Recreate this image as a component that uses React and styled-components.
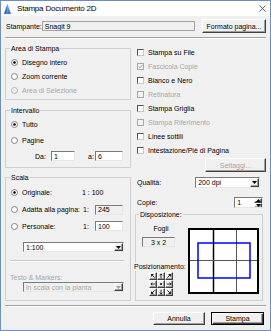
import styled, { createGlobalStyle, css } from 'styled-components'

const GlobalStyle = createGlobalStyle`
  html, body {
    margin: 0;
    padding: 0;
    background: #f0f0f0;
  }
  body {
    font-family: "Liberation Sans", Arial, sans-serif;
  }
`

const sunken = css`
  border: 1px solid;
  border-color: #7a7a7a #e6e6e6 #e6e6e6 #7a7a7a;
`

const raised = css`
  border: 1px solid;
  border-color: #fff #404040 #404040 #fff;
  box-shadow: inset -1px -1px #a0a0a0;
`

const s = {
  Window: styled.div`
    width: 271px;
    height: 331px;
    box-sizing: border-box;
    border: 1px solid #6f8fbb;
    background: #f0f0f0;
    display: flex;
    flex-direction: column;
    font-family: "Liberation Sans", Arial, sans-serif;
    font-size: 7px;
    color: #000;
    overflow: hidden;
  `,
  TitleBar: styled.div`
    height: 15px;
    flex-shrink: 0;
    background: #fff;
    display: flex;
    align-items: center;
    padding: 0 4px 0 3px;
  `,
  TitleText: styled.div`
    margin-left: 6px;
    font-size: 8px;
    letter-spacing: -0.2px;
  `,
  Close: styled.svg`
    margin-left: auto;
  `,
  Body: styled.div`
    flex: 1;
    display: flex;
    flex-direction: column;
    padding: 0 4px;
  `,
  PrinterRow: styled.div`
    margin-top: 3px;
    height: 14px;
    display: flex;
    align-items: center;
    padding-left: 1px;
  `,
  Etched: styled.div`
    margin-top: ${(p) => p.$mt || 0}px;
    height: 0;
    border-top: 1px solid #a0a0a0;
    border-bottom: 1px solid #fff;
  `,
  Main: styled.div`
    display: grid;
    grid-template-columns: 126px 1fr;
    column-gap: 4px;
    align-items: start;
  `,
  Column: styled.div`
    display: flex;
    flex-direction: column;
    padding-left: ${(p) => p.$pl || 0}px;
  `,
  Group: styled.fieldset`
    margin: ${(p) => p.$mt || 0}px ${(p) => p.$mr || 0}px 0 ${(p) => p.$ml || 0}px;
    padding: 0 ${(p) => p.$pr || 0}px ${(p) => p.$pb || 0}px ${(p) => (p.$pl ?? 4)}px;
    border: 1px solid #cfcfcf;
    min-width: 0;
    display: flex;
    flex-direction: column;
  `,
  Legend: styled.legend`
    padding: 0 1px;
    margin-left: ${(p) => p.$ml || 0}px;
    line-height: 9px;
    font-size: 7px;
  `,
  Rows: styled.div`
    display: flex;
    flex-direction: column;
    padding-top: ${(p) => p.$pt || 0}px;
  `,
  Row: styled.div`
    height: ${(p) => p.$h}px;
    display: flex;
    align-items: center;
    padding-left: ${(p) => p.$pl ?? 1}px;
    margin-top: ${(p) => p.$mt || 0}px;
  `,
  OptionPart: styled.div`
    display: flex;
    align-items: center;
    gap: 4px;
    width: ${(p) => (p.$w ? `${p.$w}px` : 'auto')};
    flex-shrink: 0;
  `,
  Label: styled.span`
    white-space: nowrap;
    width: ${(p) => (p.$w ? `${p.$w}px` : 'auto')};
    margin-left: ${(p) => p.$ml || 0}px;
    flex-shrink: 0;
    color: ${(p) => (p.$disabled ? '#a6a6a6' : '#000')};
  `,
  TextLine: styled.div`
    line-height: 9px;
    white-space: nowrap;
    margin-top: ${(p) => p.$mt || 0}px;
    margin-left: ${(p) => p.$ml || 0}px;
    color: ${(p) => (p.$disabled ? '#a6a6a6' : '#000')};
    background: #f0f0f0;
    position: relative;
    ${(p) => p.$center && 'text-align: center;'}
    ${(p) => p.$w && `width: ${p.$w}px;`}
  `,
  Field: styled.div`
    box-sizing: border-box;
    height: ${(p) => p.$h || 10}px;
    width: ${(p) => (p.$w ? `${p.$w}px` : 'auto')};
    ${(p) => p.$grow && 'flex: 1;'}
    margin-left: ${(p) => p.$ml || 0}px;
    margin-right: ${(p) => p.$mr || 0}px;
    margin-top: ${(p) => p.$mt || 0}px;
    ${(p) =>
      p.$flat
        ? 'border: 1px solid #a5a5a5;'
        : sunken}
    background: ${(p) => (p.$gray ? '#f0f0f0' : '#fff')};
    display: flex;
    align-items: center;
    justify-content: ${(p) => (p.$center ? 'center' : 'flex-start')};
    padding-left: ${(p) => (p.$center ? 0 : 2)}px;
    color: ${(p) => (p.$disabled ? '#a6a6a6' : '#000')};
    white-space: nowrap;
    overflow: hidden;
  `,
  SelectBox: styled.div`
    box-sizing: border-box;
    height: ${(p) => p.$h || 10}px;
    width: ${(p) => p.$w}px;
    margin-left: ${(p) => p.$ml || 0}px;
    margin-right: ${(p) => p.$mr || 0}px;
    margin-top: ${(p) => p.$mt || 0}px;
    ${sunken}
    background: ${(p) => (p.$disabled ? '#f0f0f0' : '#fff')};
    display: flex;
    align-items: stretch;
  `,
  SelectText: styled.div`
    flex: 1;
    display: flex;
    align-items: center;
    padding-left: 2px;
    white-space: nowrap;
    overflow: hidden;
    color: ${(p) => (p.$disabled ? '#a6a6a6' : '#000')};
  `,
  DropButton: styled.div`
    box-sizing: border-box;
    width: 9px;
    background: #f0f0f0;
    ${raised}
    display: flex;
    align-items: center;
    justify-content: center;
  `,
  SpinButtons: styled.div`
    width: 8px;
    display: flex;
    flex-direction: column;
    margin-left: auto;
  `,
  SpinButton: styled.div`
    box-sizing: border-box;
    flex: 1;
    background: #f0f0f0;
    ${raised}
    display: flex;
    align-items: center;
    justify-content: center;
  `,
  Button: styled.button`
    box-sizing: border-box;
    width: ${(p) => p.$w}px;
    height: ${(p) => p.$h || 14}px;
    margin: ${(p) => p.$mt || 0}px 0 0 ${(p) => p.$ml || 0}px;
    padding: 0;
    font: inherit;
    font-size: 7px;
    color: #000;
    background: #f0f0f0;
    ${raised}
    ${(p) => p.$self && `align-self: ${p.$self};`}
    ${(p) =>
      p.$primary &&
      css`
        border-color: #000;
        box-shadow: inset 1px 1px #fff, inset -1px -1px #404040, inset -2px -2px #a0a0a0;
      `}
    &:disabled {
      color: #a6a6a6;
    }
  `,
  CheckBox: styled.div`
    box-sizing: border-box;
    width: 7px;
    height: 7px;
    flex-shrink: 0;
    border: 1px solid;
    border-color: ${(p) => (p.$disabled ? '#a8a8a8' : '#555 #c8c8c8 #c8c8c8 #555')};
    background: ${(p) => (p.$disabled ? '#f4f4f4' : '#fff')};
    display: flex;
    align-items: center;
    justify-content: center;
  `,
  Separator: styled.div`
    width: 114px;
    margin-top: 8px;
    border-top: 1px solid #c8c8c8;
    border-bottom: 1px solid #fff;
  `,
  Layout: styled.div`
    display: flex;
    align-items: flex-start;
  `,
  SubColumn: styled.div`
    width: 48px;
    display: flex;
    flex-direction: column;
    flex-shrink: 0;
  `,
  PosGrid: styled.div`
    margin: 1px 0 0 12px;
    display: grid;
    grid-template-columns: repeat(3, 8px);
    grid-template-rows: repeat(3, 8px);
  `,
  PosButton: styled.div`
    box-sizing: border-box;
    background: #f0f0f0;
    ${raised}
    display: flex;
    align-items: center;
    justify-content: center;
  `,
  Preview: styled.svg`
    margin: 9px 0 0 3px;
    flex-shrink: 0;
    background: #fff;
  `,
  Footer: styled.div`
    margin-top: 5px;
    display: flex;
    justify-content: flex-end;
    gap: 6px;
    padding-right: 2px;
  `,
}

const Triangle = ({ up, color = '#000' }) => (
  <svg width="5" height="3" viewBox="0 0 5 3">
    <polygon points={up ? '0,3 5,3 2.5,0' : '0,0 5,0 2.5,3'} fill={color} />
  </svg>
)

const RadioMark = ({ checked, disabled }) => (
  <svg width="7" height="7" viewBox="0 0 7 7" style={{ flexShrink: 0 }}>
    <circle cx="3.5" cy="3.5" r="3" fill={disabled ? '#f0f0f0' : '#fff'} stroke={disabled ? '#b4b4b4' : '#858585'} strokeWidth="1" />
    {checked && <circle cx="3.5" cy="3.5" r="1.3" fill="#000" />}
  </svg>
)

const Option = ({ label, checked, disabled, w }) => (
  <s.OptionPart $w={w}>
    <RadioMark checked={checked} disabled={disabled} />
    <s.Label $disabled={disabled}>{label}</s.Label>
  </s.OptionPart>
)

const Check = ({ label, checked, disabled }) => (
  <s.Row $h={14} $pl={0}>
    <s.OptionPart>
      <s.CheckBox $disabled={disabled}>
        {checked && (
          <svg width="5" height="5" viewBox="0 0 5 5">
            <path d="M0.6 2.4 L2 3.8 L4.4 1" fill="none" stroke={disabled ? '#a0a0a0' : '#000'} strokeWidth="1" />
          </svg>
        )}
      </s.CheckBox>
      <s.Label $disabled={disabled}>{label}</s.Label>
    </s.OptionPart>
  </s.Row>
)

const Select = ({ value, disabled, w, h, ml, mr, mt }) => (
  <s.SelectBox $w={w} $h={h} $ml={ml} $mr={mr} $mt={mt} $disabled={disabled}>
    <s.SelectText $disabled={disabled}>{value}</s.SelectText>
    <s.DropButton>
      <Triangle color={disabled ? '#a0a0a0' : '#000'} />
    </s.DropButton>
  </s.SelectBox>
)

const Arrow = ({ angle }) => (
  <svg width="6" height="6" viewBox="0 0 6 6">
    {angle === null ? (
      <circle cx="3" cy="3" r="1" fill="#000" />
    ) : (
      <g transform={`rotate(${angle} 3 3)`} fill="none" stroke="#000" strokeWidth="0.8">
        <path d="M3 5.3 V0.9 M1.6 2.3 L3 0.9 L4.4 2.3" />
      </g>
    )}
  </svg>
)

const positions = [-45, 0, 45, -90, null, 90, -135, 180, 135]

const App = () => {
  return (
    <>
      <GlobalStyle />
      <s.Window>
        <s.TitleBar>
          <svg width="7" height="10" viewBox="0 0 7 10">
            <defs>
              <linearGradient id="ic" x1="0" y1="0" x2="1" y2="1">
                <stop offset="0" stopColor="#bcd4f6" />
                <stop offset="1" stopColor="#1f5fc8" />
              </linearGradient>
            </defs>
            <polygon points="3.5,0 7,10 0,10" fill="url(#ic)" />
            <polygon points="3.5,0 2,10 0,10" fill="#2a63c0" />
          </svg>
          <s.TitleText>Stampa Documento 2D</s.TitleText>
          <s.Close width="7" height="7" viewBox="0 0 7 7">
            <path d="M0.5 0.5 L6.5 6.5 M6.5 0.5 L0.5 6.5" stroke="#333" strokeWidth="0.8" />
          </s.Close>
        </s.TitleBar>

        <s.Body>
          <s.PrinterRow>
            <s.Label>Stampante:</s.Label>
            <s.Field $grow $flat $gray>Snagit 9</s.Field>
            <s.Button $w={64} $ml={7}>Formato pagina...</s.Button>
          </s.PrinterRow>
          <s.Etched $mt={4} />

          <s.Main>
            <s.Column>
              <s.Group $mt={5} $pb={2}>
                <s.Legend>Area di Stampa</s.Legend>
                <s.Rows $pt={2}>
                  <s.Row $h={14}><Option label="Disegno intero" checked /></s.Row>
                  <s.Row $h={14}><Option label="Zoom corrente" /></s.Row>
                  <s.Row $h={14}><Option label="Area di Selezione" disabled /></s.Row>
                </s.Rows>
              </s.Group>

              <s.Group $mt={6} $pb={3}>
                <s.Legend>Intervallo</s.Legend>
                <s.Rows $pt={1}>
                  <s.Row $h={16}><Option label="Tutto" checked /></s.Row>
                  <s.Row $h={16}><Option label="Pagine" /></s.Row>
                  <s.Row $h={16} $pl={25}>
                    <s.Label $w={16}>Da:</s.Label>
                    <s.Field $w={24}>1</s.Field>
                    <s.Label $w={7} $ml={13}>a:</s.Label>
                    <s.Field $w={28}>6</s.Field>
                  </s.Row>
                </s.Rows>
              </s.Group>

              <s.Group $mt={5} $pb={8}>
                <s.Legend>Scala</s.Legend>
                <s.Rows $pt={2}>
                  <s.Row $h={17}>
                    <Option label="Originale:" checked w={71} />
                    <s.Label>1 : 100</s.Label>
                  </s.Row>
                  <s.Row $h={17}>
                    <Option label="Adatta alla pagina:" w={72} />
                    <s.Label $w={12}>1:</s.Label>
                    <s.Field $w={28} $gray>245</s.Field>
                  </s.Row>
                  <s.Row $h={16}>
                    <Option label="Personale:" w={72} />
                    <s.Label $w={12}>1:</s.Label>
                    <s.Field $w={28}>100</s.Field>
                  </s.Row>
                </s.Rows>
                <Select value="1:100" w={101} ml={13} mt={8} />
                <s.Separator />
                <s.TextLine $mt={11} $disabled>Testo &amp; Markers:</s.TextLine>
                <Select value="in scala con la pianta" w={101} ml={13} disabled />
              </s.Group>
            </s.Column>

            <s.Column $pl={2}>
              <s.Rows $pt={6}>
                <Check label="Stampa su File" />
                <Check label="Fascicola Copie" checked disabled />
                <Check label="Bianco e Nero" />
                <Check label="Retinatura" disabled />
                <Check label="Stampa Griglia" />
                <Check label="Stampa Riferimento" disabled />
                <Check label="Linee sottili" />
                <Check label="Intestazione/Piè di Pagina" />
              </s.Rows>
              <s.Button $w={61} $mt={1} $self="flex-end" disabled>Settaggi...</s.Button>

              <s.Row $h={11} $pl={0} $mt={5}>
                <s.Label>Qualità:</s.Label>
                <Select value="200 dpi" w={65} h={11} ml={34} />
              </s.Row>
              <s.Row $h={11} $pl={0} $mt={9}>
                <s.Label>Copie:</s.Label>
                <s.Field $w={29} $h={11} $ml={77}>
                  1
                  <s.SpinButtons>
                    <s.SpinButton><Triangle up /></s.SpinButton>
                    <s.SpinButton><Triangle /></s.SpinButton>
                  </s.SpinButtons>
                </s.Field>
              </s.Row>

              <s.Group $mt={2} $ml={-2} $mr={3} $pl={1} $pr={3} $pb={4}>
                <s.Legend $ml={2}>Disposizione:</s.Legend>
                <s.Layout>
                  <s.SubColumn>
                    <s.TextLine $mt={5} $center $w={48}>Fogli</s.TextLine>
                    <s.Field $w={33} $ml={5} $mt={4} $gray $center>3 x 2</s.Field>
                    <s.TextLine $mt={15} $ml={-3}>Posizionamento:</s.TextLine>
                    <s.PosGrid>
                      {positions.map((a, i) => (
                        <s.PosButton key={i}>
                          <Arrow angle={a} />
                        </s.PosButton>
                      ))}
                    </s.PosGrid>
                  </s.SubColumn>
                  <s.Preview width="71" height="66" viewBox="0 0 71 66">
                    <line x1="25.5" y1="0" x2="25.5" y2="66" stroke="#000" strokeWidth="1.5" />
                    <line x1="48.5" y1="0" x2="48.5" y2="66" stroke="#555" strokeWidth="1" />
                    <line x1="0" y1="32.5" x2="71" y2="32.5" stroke="#555" strokeWidth="1" />
                    <rect x="10" y="15" width="52" height="35" fill="none" stroke="#0000ff" strokeWidth="1.5" />
                    <rect x="1" y="1" width="69" height="64" fill="none" stroke="#000" strokeWidth="2" />
                  </s.Preview>
                </s.Layout>
              </s.Group>
            </s.Column>
          </s.Main>

          <s.Etched $mt={4} />
          <s.Footer>
            <s.Button $w={52} $h={13}>Annulla</s.Button>
            <s.Button $w={53} $h={13} $primary>Stampa</s.Button>
          </s.Footer>
        </s.Body>
      </s.Window>
    </>
  )
}

export default App
